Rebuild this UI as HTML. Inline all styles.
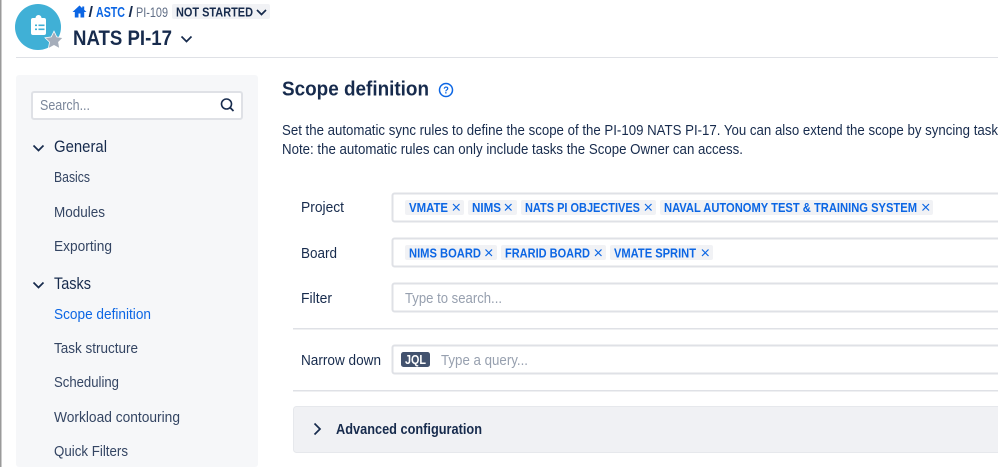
<!DOCTYPE html>
<html><head><meta charset="utf-8"><title>Scope definition</title>
<style>
html,body{margin:0;padding:0;background:#fff;width:998px;height:467px;overflow:hidden}
svg{display:block;filter:blur(.3px)}
text{font-family:"Liberation Sans",sans-serif;font-size:15px;fill:#344563;stroke:currentColor;stroke-width:0}
.n{fill:#172b4d}
.b{font-weight:700}
.t{font-size:12.500px;font-weight:700;fill:#0c66e4}
.ph{fill:#97a0af}
.tag{fill:#f1f2f5}
.x{stroke:#0c66e4;stroke-width:1.2;fill:none}
.box{fill:#fff;stroke:#dfe1e6;stroke-width:2}
.c{fill:none;stroke:#172b4d;stroke-width:1.7}
</style></head><body>
<svg width="998" height="467" viewBox="0 0 998 467" xmlns="http://www.w3.org/2000/svg">
<rect x="0" y="0" width="1.5" height="467" fill="#9a9a9a"/>
<rect x="16" y="57" width="982" height="1" fill="#dfe1e6"/>
<rect x="16" y="75" width="242" height="392" rx="3" fill="#f6f7f9"/>

<!-- project icon -->
<circle cx="38" cy="27" r="23" fill="#40b0d6"/>
<path d="M33 18h2.500a3 3 0 0 1 6 0h2.500a2 2 0 0 1 2 2v13a2 2 0 0 1-2 2H33a2 2 0 0 1-2-2V20a2 2 0 0 1 2-2z" fill="#fff"/>
<rect x="35" y="24.500" width="2" height="1.600" fill="#40b0d6"/><rect x="38.500" y="24.500" width="6" height="1.600" fill="#40b0d6"/>
<rect x="35" y="28.500" width="2" height="1.600" fill="#40b0d6"/><rect x="38.500" y="28.500" width="6" height="1.600" fill="#40b0d6"/>
<path d="M54 32l2.500 5.200 5.700.8-4.100 4 1 5.700-5.100-2.700-5.100 2.700 1-5.700-4.100-4 5.700-.8z" fill="#a5adba" stroke="#fff" stroke-width="1.500" paint-order="stroke"/>

<!-- breadcrumb -->
<path d="M79.500 5.500L72.500 12h2.300v5.500h3.700v-4h2v4h3.700V12h2.300l-2.300-2.100V6.500h-2v1.600z" fill="#0c66e4"/>
<text x="88.500" y="17" textLength="4.500" lengthAdjust="spacingAndGlyphs" class="n b">/</text>
<text x="96" y="17" textLength="29" lengthAdjust="spacingAndGlyphs" font-weight="700" style="fill:#0c66e4;font-size:14.500px">ASTC</text>
<text x="128.500" y="17" textLength="4.500" lengthAdjust="spacingAndGlyphs" class="n b">/</text>
<text x="136" y="17" textLength="32" lengthAdjust="spacingAndGlyphs" style="font-size:14px;fill:#5e6c84">PI-109</text>
<rect x="172" y="4" width="98" height="15" rx="2" fill="#f1f2f5"/>
<text x="176" y="16.500" textLength="77" lengthAdjust="spacingAndGlyphs" class="n b" style="font-size:13px">NOT STARTED</text>
<path d="M257 10l4.500 4.500L266 10" class="c"/>

<!-- title -->
<text x="73" y="45" textLength="99" lengthAdjust="spacingAndGlyphs" class="n b" style="font-size:21.500px">NATS PI-17</text>
<path d="M181.500 36.500l5 5 5-5" class="c"/>

<!-- search -->
<rect x="32" y="92" width="210" height="27" rx="2" class="box"/>
<text x="40" y="110" textLength="50" lengthAdjust="spacingAndGlyphs" style="font-size:15px;fill:#7a869a">Search...</text>
<circle cx="226.500" cy="104" r="5" fill="none" stroke="#172b4d" stroke-width="1.600"/>
<path d="M230 107.500l3.500 3.500" stroke="#172b4d" stroke-width="1.800" fill="none"/>

<!-- side nav -->
<path d="M33.500 145.500l5 5 5-5" class="c"/>
<text x="54" y="152" textLength="53" lengthAdjust="spacingAndGlyphs" class="n" style="font-size:16.500px">General</text>
<text x="54" y="182" textLength="36" lengthAdjust="spacingAndGlyphs">Basics</text>
<text x="54" y="217" textLength="51" lengthAdjust="spacingAndGlyphs">Modules</text>
<text x="54" y="251" textLength="58" lengthAdjust="spacingAndGlyphs">Exporting</text>
<path d="M33.500 282.500l5 5 5-5" class="c"/>
<text x="54" y="289" textLength="37" lengthAdjust="spacingAndGlyphs" class="n" style="font-size:16.500px">Tasks</text>
<text x="54" y="319" textLength="97" lengthAdjust="spacingAndGlyphs" style="fill:#0c66e4">Scope definition</text>
<text x="54" y="353" textLength="84" lengthAdjust="spacingAndGlyphs">Task structure</text>
<text x="54" y="387" textLength="65" lengthAdjust="spacingAndGlyphs">Scheduling</text>
<text x="54" y="422" textLength="126" lengthAdjust="spacingAndGlyphs">Workload contouring</text>
<text x="54" y="456" textLength="74" lengthAdjust="spacingAndGlyphs">Quick Filters</text>

<!-- heading -->
<text x="282" y="95.500" textLength="147" lengthAdjust="spacingAndGlyphs" class="n b" style="font-size:20.500px">Scope definition</text>
<circle cx="446" cy="90" r="6.500" fill="none" stroke="#0c66e4" stroke-width="1.500"/>
<text x="443.200" y="93.500" textLength="5.600" lengthAdjust="spacingAndGlyphs" class="b" style="font-size:10px;fill:#0c66e4">?</text>

<text x="282" y="135" textLength="716" lengthAdjust="spacingAndGlyphs" class="n">Set the automatic sync rules to define the scope of the PI-109 NATS PI-17. You can also extend the scope by syncing task</text>
<text x="282" y="154" textLength="461" lengthAdjust="spacingAndGlyphs" class="n">Note: the automatic rules can only include tasks the Scope Owner can access.</text>

<!-- labels -->
<text x="301" y="212" textLength="43" lengthAdjust="spacingAndGlyphs" class="n">Project</text>
<text x="301" y="258" textLength="36" lengthAdjust="spacingAndGlyphs" class="n">Board</text>
<text x="301" y="303" textLength="31" lengthAdjust="spacingAndGlyphs" class="n">Filter</text>
<text x="301" y="365" textLength="80" lengthAdjust="spacingAndGlyphs" class="n">Narrow down</text>

<!-- inputs -->
<rect x="392.500" y="193.500" width="620" height="28" rx="2" class="box"/>
<rect x="392.500" y="238.500" width="620" height="28" rx="2" class="box"/>
<rect x="392.500" y="283.500" width="620" height="28" rx="2" class="box"/>
<rect x="392.500" y="345.500" width="620" height="28" rx="2" class="box"/>

<!-- project tags -->
<rect x="405" y="200" width="59" height="15" rx="2" class="tag"/>
<text x="409" y="212" textLength="39" lengthAdjust="spacingAndGlyphs" class="t">VMATE</text>
<path d="M453 204l6.500 6.500M459.500 204l-6.500 6.500" class="x"/>
<rect x="468" y="200" width="49" height="15" rx="2" class="tag"/>
<text x="472" y="212" textLength="29" lengthAdjust="spacingAndGlyphs" class="t">NIMS</text>
<path d="M505 204l6.500 6.500M511.500 204l-6.500 6.500" class="x"/>
<rect x="521" y="200" width="135" height="15" rx="2" class="tag"/>
<text x="525" y="212" textLength="115" lengthAdjust="spacingAndGlyphs" class="t">NATS PI OBJECTIVES</text>
<path d="M645 204l6.500 6.500M651.500 204l-6.500 6.500" class="x"/>
<rect x="660" y="200" width="273" height="15" rx="2" class="tag"/>
<text x="664" y="212" textLength="253" lengthAdjust="spacingAndGlyphs" class="t">NAVAL AUTONOMY TEST &amp; TRAINING SYSTEM</text>
<path d="M922.500 204l6.500 6.500M929 204l-6.500 6.500" class="x"/>

<!-- board tags -->
<rect x="405" y="245" width="92" height="15" rx="2" class="tag"/>
<text x="409" y="257.500" textLength="72" lengthAdjust="spacingAndGlyphs" class="t">NIMS BOARD</text>
<path d="M485.500 249.500l6.500 6.500M492 249.500l-6.500 6.500" class="x"/>
<rect x="501" y="245" width="105" height="15" rx="2" class="tag"/>
<text x="505" y="257.500" textLength="85" lengthAdjust="spacingAndGlyphs" class="t">FRARID BOARD</text>
<path d="M595 249.500l6.500 6.500M601.500 249.500l-6.500 6.500" class="x"/>
<rect x="610" y="245" width="103" height="15" rx="2" class="tag"/>
<text x="614" y="257.500" textLength="82" lengthAdjust="spacingAndGlyphs" class="t">VMATE SPRINT</text>
<path d="M702 249.500l6.500 6.500M708.500 249.500l-6.500 6.500" class="x"/>

<text x="405" y="303" textLength="97" lengthAdjust="spacingAndGlyphs" class="ph">Type to search...</text>
<rect x="401" y="352" width="29" height="15" rx="2.500" fill="#42526e"/>
<text x="405" y="364" textLength="21" lengthAdjust="spacingAndGlyphs" class="b" style="font-size:13px;fill:#fff">JQL</text>
<text x="441" y="365" textLength="87" lengthAdjust="spacingAndGlyphs" class="ph">Type a query...</text>

<!-- dividers -->
<rect x="293" y="328" width="705" height="1.500" fill="#dfe1e6"/>
<rect x="293" y="390" width="705" height="1.500" fill="#dfe1e6"/>

<!-- advanced -->
<rect x="293.500" y="406.500" width="720" height="46" rx="3" fill="#f0f1f4" stroke="#e6e8ec"/>
<path d="M314.500 423.500l5.500 5.500-5.500 5.500" class="c"/>
<text x="336" y="434" textLength="146" lengthAdjust="spacingAndGlyphs" class="n b" style="font-size:15px">Advanced configuration</text>
</svg>
</body></html>
